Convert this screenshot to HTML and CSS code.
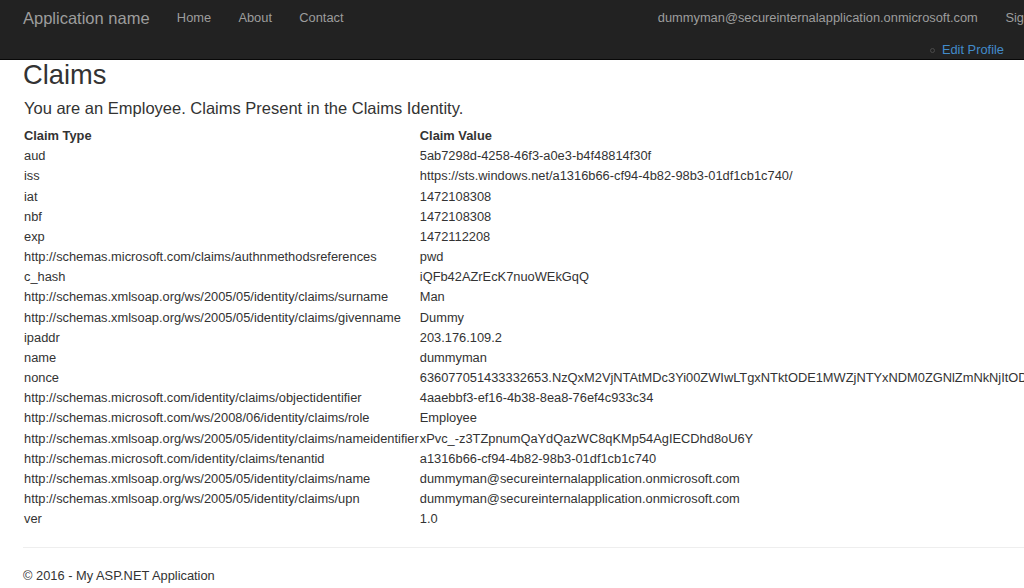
FILE: index.html
```html
<!DOCTYPE html>
<html lang="en">
<head>
<meta charset="utf-8">
<title>Claims - My ASP.NET Application</title>
<link rel="stylesheet" href="styles.css">
</head>
<body>
<header class="navbar">
  <div class="nav-row">
    <a class="brand" href="#">Application name</a>
    <ul class="nav-links">
      <li><a href="#">Home</a></li>
      <li><a href="#">About</a></li>
      <li><a href="#">Contact</a></li>
    </ul>
    <ul class="nav-links nav-right">
      <li><a href="#">dummyman@secureinternalapplication.onmicrosoft.com</a></li>
      <li><a href="#">Sign out</a></li>
    </ul>
  </div>
  <div class="nav-row2">
    <span class="bullet"></span><a class="profile" href="#">Edit Profile</a>
  </div>
</header>
<main class="content">
  <h2 class="title">Claims</h2>
  <p class="subtitle">You are an Employee. Claims Present in the Claims Identity.</p>
  <table class="claims">
    <thead>
      <tr><th>Claim Type</th><th>Claim Value</th></tr>
    </thead>
    <tbody>
      <tr><td>aud</td><td>5ab7298d-4258-46f3-a0e3-b4f48814f30f</td></tr>
      <tr><td>iss</td><td>https://sts.windows.net/a1316b66-cf94-4b82-98b3-01df1cb1c740/</td></tr>
      <tr><td>iat</td><td>1472108308</td></tr>
      <tr><td>nbf</td><td>1472108308</td></tr>
      <tr><td>exp</td><td>1472112208</td></tr>
      <tr><td>http://schemas.microsoft.com/claims/authnmethodsreferences</td><td>pwd</td></tr>
      <tr><td>c_hash</td><td>iQFb42AZrEcK7nuoWEkGqQ</td></tr>
      <tr><td>http://schemas.xmlsoap.org/ws/2005/05/identity/claims/surname</td><td>Man</td></tr>
      <tr><td>http://schemas.xmlsoap.org/ws/2005/05/identity/claims/givenname</td><td>Dummy</td></tr>
      <tr><td>ipaddr</td><td>203.176.109.2</td></tr>
      <tr><td>name</td><td>dummyman</td></tr>
      <tr><td>nonce</td><td>636077051433332653.NzQxM2VjNTAtMDc3Yi00ZWIwLTgxNTktODE1MWZjNTYxNDM0ZGNlZmNkNjItODk0Yy00MzE2LWE1ZjUtYjA4ZTE5YjQ2MzQ4</td></tr>
      <tr><td>http://schemas.microsoft.com/identity/claims/objectidentifier</td><td>4aaebbf3-ef16-4b38-8ea8-76ef4c933c34</td></tr>
      <tr><td>http://schemas.microsoft.com/ws/2008/06/identity/claims/role</td><td>Employee</td></tr>
      <tr><td>http://schemas.xmlsoap.org/ws/2005/05/identity/claims/nameidentifier</td><td>xPvc_-z3TZpnumQaYdQazWC8qKMp54AgIECDhd8oU6Y</td></tr>
      <tr><td>http://schemas.microsoft.com/identity/claims/tenantid</td><td>a1316b66-cf94-4b82-98b3-01df1cb1c740</td></tr>
      <tr><td>http://schemas.xmlsoap.org/ws/2005/05/identity/claims/name</td><td>dummyman@secureinternalapplication.onmicrosoft.com</td></tr>
      <tr><td>http://schemas.xmlsoap.org/ws/2005/05/identity/claims/upn</td><td>dummyman@secureinternalapplication.onmicrosoft.com</td></tr>
      <tr><td>ver</td><td>1.0</td></tr>
    </tbody>
  </table>
  <hr class="rule">
  <footer class="footer">
    <p>&copy; 2016 - My ASP.NET Application</p>
  </footer>
</main>
</body>
</html>
```

FILE: styles.css
```css
html {
  overflow: hidden;
}

body {
  margin: 0;
  font-family: "Liberation Sans", Arial, sans-serif;
  font-size: 12.85px;
  color: #333333;
  background: #ffffff;
}

a {
  text-decoration: none;
}

.navbar {
  background: #222222;
  border-bottom: 1px solid #080808;
  height: 59px;
  width: 1024px;
  overflow: hidden;
}

.nav-row {
  display: flex;
  align-items: center;
  height: 36px;
  padding-left: 23px;
  white-space: nowrap;
}

.brand {
  font-size: 16.5px;
  line-height: 18px;
  color: #9d9d9d;
  padding-right: 13.65px;
}

.nav-links {
  display: flex;
  list-style: none;
  margin: 0;
  padding: 0;
}

.nav-links li a {
  display: block;
  padding: 0 13.65px;
  line-height: 18px;
  color: #9d9d9d;
}

.nav-right {
  margin-left: 287px;
}

.nav-right li + li a {
  padding-left: 14px;
}

.nav-row2 {
  display: flex;
  align-items: center;
  justify-content: flex-end;
  padding-top: 5px;
  height: 18px;
  padding-right: 20px;
}

.bullet {
  width: 3px;
  height: 3px;
  border: 1px solid #4a4a4a;
  border-radius: 50%;
  margin-right: 7px;
  margin-top: 1px;
}

.profile {
  color: #428bca;
  line-height: 18px;
}

.content {
  padding-left: 23px;
}

.title {
  margin: 0;
  font-size: 27.3px;
  line-height: 30px;
  font-weight: normal;
}

.subtitle {
  margin: 7px 0 0 1px;
  font-size: 16.5px;
  line-height: 22px;
}

.claims {
  margin-top: 7px;
  margin-left: 1px;
  border-collapse: collapse;
  border-spacing: 0;
  white-space: nowrap;
}

.claims th,
.claims td {
  padding: 0;
  text-align: left;
  line-height: 20.17px;
  height: 20.17px;
}

.claims th {
  font-weight: bold;
}

.claims td:first-child,
.claims th:first-child {
  padding-right: 1px;
}

.rule {
  margin: 18px 0 0 0;
  border: 0;
  border-top: 1px solid #eeeeee;
  height: 0;
}

.footer p {
  margin: 18px 0 0 0;
  line-height: 20px;
}
```
